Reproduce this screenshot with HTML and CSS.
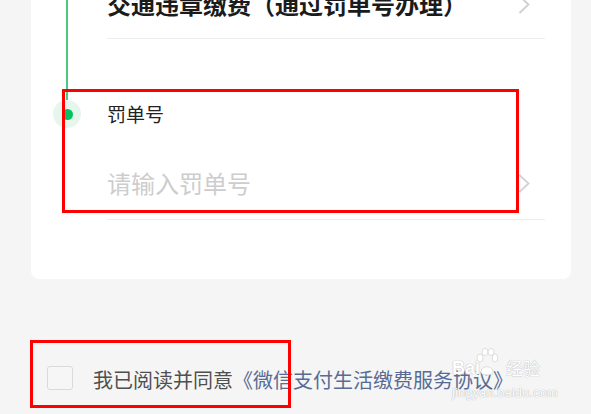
FILE: index.html
```html
<!DOCTYPE html>
<html lang="zh-CN">
<head>
<meta charset="utf-8">
<link rel="stylesheet" href="styles.css">
<title>罚单号</title>
</head>
<body>
<div class="page">
  <section class="card">
    <div class="step step-first">
      <div class="rail"><span class="line line-full"></span></div>
      <div class="content row">
        <span class="title">交通违章缴费（通过罚单号办理）</span>
        <svg class="chev" viewBox="0 0 12 19" width="12" height="19"><polyline points="1.5,1 10.5,9.5 1.5,18" fill="none" stroke="#cfcfcf" stroke-width="1.8"/></svg>
      </div>
    </div>
    <div class="step step-second">
      <div class="rail rail-dot">
        <span class="line line-top"></span>
        <span class="halo"><span class="dot"></span></span>
      </div>
      <div class="content">
        <div class="label">罚单号</div>
        <div class="row input-row">
          <span class="placeholder">请输入罚单号</span>
          <svg class="chev" viewBox="0 0 12 19" width="12" height="19"><polyline points="1.5,1 10.5,9.5 1.5,18" fill="none" stroke="#d3d3d3" stroke-width="1.8"/></svg>
        </div>
      </div>
    </div>
  </section>

  <div class="agree">
    <span class="checkbox"></span>
    <span class="agree-text">我已阅读并同意<a class="link">《微信支付生活缴费服务协议》</a></span>
  </div>

  <div class="mark mark-input"></div>
  <div class="mark mark-agree"></div>

  <div class="watermark">
    <div class="wm-top">
      <span class="wm-bai">Bai</span>
      <svg class="wm-paw" viewBox="0 0 22 30" width="22" height="30">
        <g fill="#fff" stroke="#d6d6d6" stroke-width="0.8">
          <ellipse cx="4" cy="10" rx="3" ry="4"/>
          <ellipse cx="9" cy="4" rx="3" ry="3.6"/>
          <ellipse cx="15" cy="4" rx="3" ry="3.6"/>
          <ellipse cx="19" cy="10" rx="2.8" ry="4"/>
          <path d="M5 24 C5 17 17 17 17 24 C17 28 5 28 5 24 Z"/>
        </g>
      </svg>
      <span class="wm-jy">经验</span>
    </div>
    <div class="wm-url">jingyan.baidu.com</div>
  </div>
</div>
</body>
</html>
```

FILE: styles.css
```css
* { box-sizing: border-box; margin: 0; padding: 0; }

html, body {
  width: 591px;
  height: 414px;
  overflow: hidden;
  background: #f5f5f5;
}

body {
  font-family: "Noto Sans CJK SC", "Noto Sans", sans-serif;
}

.page {
  position: relative;
  width: 591px;
  height: 414px;
  overflow: hidden;
}

.card {
  margin: -30px 20px 0 31px;
  width: 540px;
  background: #fff;
  border-radius: 8px;
  padding-bottom: 59px;
}

.step {
  display: grid;
  grid-template-columns: 76px 1fr;
}

.rail {
  display: flex;
  flex-direction: column;
  align-items: center;
  width: 28px;
  margin-left: 22px;
}

.line {
  display: block;
  width: 2px;
  background: #4cc77f;
}

.line-full {
  height: 100%;
  margin-left: -1px;
}

.line-top {
  height: 61px;
  margin-left: -1px;
}

.halo {
  width: 28px;
  height: 28px;
  border-radius: 50%;
  background: #e7f6ec;
  display: flex;
  align-items: center;
  justify-content: center;
}

.dot {
  width: 11px;
  height: 11px;
  border-radius: 50%;
  background: #07c160;
}

.content {
  margin-right: 26px;
}

.row {
  display: flex;
  align-items: center;
  justify-content: space-between;
  border-bottom: 1px solid #ededed;
}

.step-first .row {
  padding: 18px 15px 18px 0;
}

.title {
  font-size: 24px;
  line-height: 32px;
  font-weight: 700;
  color: #1b1b1b;
}

.label {
  margin-top: 62px;
  font-size: 19px;
  line-height: 26px;
  color: #222;
}

.input-row {
  margin-top: 40px;
  padding: 0 15px 20px 0;
}

.placeholder {
  font-size: 24px;
  line-height: 32px;
  color: #cdcdcd;
}

.chev {
  display: block;
  flex: none;
}

.agree {
  display: flex;
  align-items: center;
  margin: 85px 0 0 47px;
  height: 28px;
}

.checkbox {
  width: 26px;
  height: 24px;
  border: 1.5px solid #dadada;
  border-radius: 3px;
  background: #f6f6f6;
  flex: none;
}

.agree-text {
  margin-left: 20px;
  font-size: 20px;
  line-height: 28px;
  color: #4f4f4f;
  white-space: nowrap;
  margin-top: 3px;
}

.link {
  color: #576b95;
}

.mark {
  position: absolute;
  border: 3px solid #ff0000;
}

.mark-input {
  left: 62px;
  top: 89px;
  width: 457px;
  height: 124px;
}

.mark-agree {
  left: 30px;
  top: 340px;
  width: 261px;
  height: 68px;
}

.watermark {
  position: absolute;
  left: 452px;
  top: 348px;
  width: 110px;
  color: #fff;
  text-shadow: 0 0 1px #b8b8b8, 0 0 1px #b8b8b8;
  font-family: "Liberation Sans", "Noto Sans CJK SC", sans-serif;
  display: flex;
  flex-direction: column;
  gap: 8px;
}

.wm-top {
  display: flex;
  align-items: flex-end;
  gap: 0;
}

.wm-bai {
  font-size: 18px;
  font-weight: 700;
  line-height: 20px;
}

.wm-paw {
  display: block;
  margin: 0 2px 0 -4px;
}

.wm-jy {
  font-family: "Noto Sans CJK SC", sans-serif;
  font-size: 17px;
  line-height: 20px;
  margin-left: 6px;
}

.wm-url {
  font-size: 12.5px;
  line-height: 14px;
  letter-spacing: 0.3px;
}
```
